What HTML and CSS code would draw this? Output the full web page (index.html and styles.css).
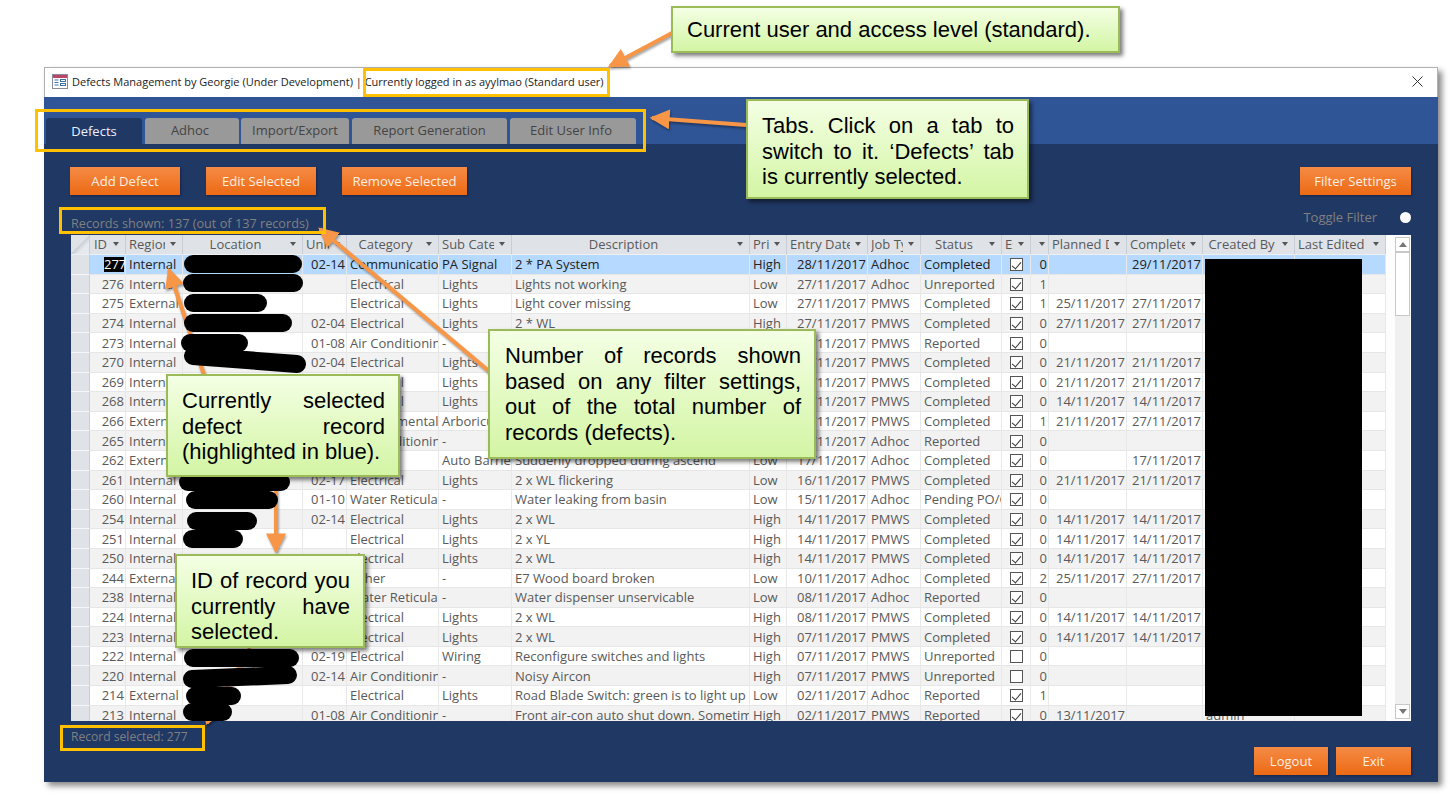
FILE: index.html
```html
<!DOCTYPE html>
<html lang="en">
<head>
  <meta charset="UTF-8" />
  <title>Defects Management</title>
  <link rel="stylesheet" href="styles.css">
</head>
<body>
  <div class="window">
    <div class="titlebar">
      <svg class="appicon" width="16" height="15" viewBox="0 0 16 15">
        <rect x="0.5" y="0.5" width="15" height="14" fill="#fff" stroke="#8a8a9a"/>
        <rect x="1" y="1" width="14" height="3" fill="#b8476a"/>
        <path d="M2.5 6h4M2.5 8.5h4M2.5 11h4" stroke="#3f6fa8" stroke-width="1"/>
        <rect x="8.5" y="5.5" width="5" height="2" fill="#fff" stroke="#3f6fa8"/>
        <rect x="8.5" y="9.5" width="5" height="2" fill="#fff" stroke="#3f6fa8"/>
      </svg>
      <span class="titletext">Defects Management by Georgie (Under Development) | Currently logged in as ayylmao (Standard user)</span>
      <svg class="closex" width="11" height="11" viewBox="0 0 11 11"><path d="M0.5 0.5l10 10M10.5 0.5l-10 10" stroke="#333" stroke-width="1"/></svg>
    </div>

    <div class="tabbar">
      <div class="tab tab-active tab-defects">Defects</div>
      <div class="tab tab-adhoc">Adhoc</div>
      <div class="tab tab-import">Import/Export</div>
      <div class="tab tab-report">Report Generation</div>
      <div class="tab tab-edit">Edit User Info</div>
    </div>

    <div class="main">
      <div class="toolbar">
        <button class="btn btn-add">Add Defect</button>
        <button class="btn btn-edit">Edit Selected</button>
        <button class="btn btn-remove">Remove Selected</button>
        <button class="btn btn-filter">Filter Settings</button>
      </div>

      <div class="statusrow">
        <span class="muted records">Records shown: 137 (out of 137 records)</span>
        <span class="muted toggle">Toggle Filter</span>
        <span class="dot"></span>
      </div>

      <div class="gridwrap">
        <table class="grid">
          <colgroup>
            <col class="c-sel"><col class="c-id"><col class="c-region"><col class="c-loc"><col class="c-unit"><col class="c-cat"><col class="c-sub"><col class="c-desc"><col class="c-pri"><col class="c-entry"><col class="c-job"><col class="c-status"><col class="c-esc"><col class="c-count"><col class="c-plan"><col class="c-done"><col class="c-by"><col class="c-edit">
          </colgroup>
          <thead>
            <tr>
              <th class="corner"></th>
              <th><div class="hd"><span>ID</span><i></i></div></th>
              <th><div class="hd"><span>Region</span><i></i></div></th>
              <th><div class="hd mid"><span>Location</span><i></i></div></th>
              <th><div class="hd"><span>Unit No</span><i></i></div></th>
              <th><div class="hd mid"><span>Category</span><i></i></div></th>
              <th><div class="hd"><span>Sub Category</span><i></i></div></th>
              <th><div class="hd mid"><span>Description</span><i></i></div></th>
              <th><div class="hd"><span>Priority</span><i></i></div></th>
              <th><div class="hd"><span>Entry Date</span><i></i></div></th>
              <th><div class="hd"><span>Job Type</span><i></i></div></th>
              <th><div class="hd mid"><span>Status</span><i></i></div></th>
              <th><div class="hd"><span>Escalated</span><i></i></div></th>
              <th><div class="hd"><span></span><i></i></div></th>
              <th><div class="hd"><span>Planned Date</span><i></i></div></th>
              <th><div class="hd"><span>Completed Date</span><i></i></div></th>
              <th><div class="hd mid"><span>Created By</span><i></i></div></th>
              <th><div class="hd"><span>Last Edited By</span><i></i></div></th>
            </tr>
          </thead>
          <tbody>
            <tr class="picked"><td class="firstsel"></td><td><span class="idpick">277</span></td><td>Internal</td><td></td><td>02-14</td><td>Communications</td><td>PA Signal</td><td>2 * PA System</td><td>High</td><td>28/11/2017</td><td>Adhoc</td><td>Completed</td><td><span class="chk on"></span></td><td>0</td><td></td><td>29/11/2017</td><td></td><td></td></tr>
            <tr><td></td><td>276</td><td>Internal</td><td></td><td></td><td>Electrical</td><td>Lights</td><td>Lights not working</td><td>Low</td><td>27/11/2017</td><td>Adhoc</td><td>Unreported</td><td><span class="chk on"></span></td><td>1</td><td></td><td></td><td></td><td></td></tr>
            <tr><td></td><td>275</td><td>External</td><td></td><td></td><td>Electrical</td><td>Lights</td><td>Light cover missing</td><td>Low</td><td>27/11/2017</td><td>PMWS</td><td>Completed</td><td><span class="chk on"></span></td><td>1</td><td>25/11/2017</td><td>27/11/2017</td><td></td><td></td></tr>
            <tr><td></td><td>274</td><td>Internal</td><td></td><td>02-04</td><td>Electrical</td><td>Lights</td><td>2 * WL</td><td>High</td><td>27/11/2017</td><td>PMWS</td><td>Completed</td><td><span class="chk on"></span></td><td>0</td><td>27/11/2017</td><td>27/11/2017</td><td></td><td></td></tr>
            <tr><td></td><td>273</td><td>Internal</td><td></td><td>01-08</td><td>Air Conditioning</td><td>-</td><td></td><td></td><td>27/11/2017</td><td>PMWS</td><td>Reported</td><td><span class="chk on"></span></td><td>0</td><td></td><td></td><td></td><td></td></tr>
            <tr><td></td><td>270</td><td>Internal</td><td></td><td>02-04</td><td>Electrical</td><td>Lights</td><td></td><td></td><td>27/11/2017</td><td>PMWS</td><td>Completed</td><td><span class="chk on"></span></td><td>0</td><td>21/11/2017</td><td>21/11/2017</td><td></td><td></td></tr>
            <tr><td></td><td>269</td><td>Internal</td><td></td><td></td><td>Electrical</td><td>Lights</td><td></td><td></td><td>21/11/2017</td><td>PMWS</td><td>Completed</td><td><span class="chk on"></span></td><td>0</td><td>21/11/2017</td><td>21/11/2017</td><td></td><td></td></tr>
            <tr><td></td><td>268</td><td>Internal</td><td></td><td></td><td>Electrical</td><td>Lights</td><td></td><td></td><td>21/11/2017</td><td>PMWS</td><td>Completed</td><td><span class="chk on"></span></td><td>0</td><td>14/11/2017</td><td>14/11/2017</td><td></td><td></td></tr>
            <tr><td></td><td>266</td><td>External</td><td></td><td></td><td>Environmental</td><td>Arboriculture</td><td></td><td></td><td>21/11/2017</td><td>PMWS</td><td>Completed</td><td><span class="chk on"></span></td><td>1</td><td>21/11/2017</td><td>27/11/2017</td><td></td><td></td></tr>
            <tr><td></td><td>265</td><td>Internal</td><td></td><td></td><td>Air Conditioning</td><td>-</td><td></td><td></td><td>20/11/2017</td><td>Adhoc</td><td>Reported</td><td><span class="chk on"></span></td><td>0</td><td></td><td></td><td></td><td></td></tr>
            <tr><td></td><td>262</td><td>External</td><td></td><td></td><td></td><td>Auto Barrier</td><td>Suddenly dropped during ascend</td><td>Low</td><td>17/11/2017</td><td>Adhoc</td><td>Completed</td><td><span class="chk on"></span></td><td>0</td><td></td><td>17/11/2017</td><td></td><td></td></tr>
            <tr><td></td><td>261</td><td>Internal</td><td></td><td>02-17</td><td>Electrical</td><td>Lights</td><td>2 x WL flickering</td><td>Low</td><td>16/11/2017</td><td>PMWS</td><td>Completed</td><td><span class="chk on"></span></td><td>0</td><td>21/11/2017</td><td>21/11/2017</td><td></td><td></td></tr>
            <tr><td></td><td>260</td><td>Internal</td><td></td><td>01-10</td><td>Water Reticulation</td><td>-</td><td>Water leaking from basin</td><td>Low</td><td>15/11/2017</td><td>Adhoc</td><td>Pending PO/Quote</td><td><span class="chk on"></span></td><td>0</td><td></td><td></td><td></td><td></td></tr>
            <tr><td></td><td>254</td><td>Internal</td><td></td><td>02-14</td><td>Electrical</td><td>Lights</td><td>2 x WL</td><td>High</td><td>14/11/2017</td><td>PMWS</td><td>Completed</td><td><span class="chk on"></span></td><td>0</td><td>14/11/2017</td><td>14/11/2017</td><td></td><td></td></tr>
            <tr><td></td><td>251</td><td>Internal</td><td></td><td></td><td>Electrical</td><td>Lights</td><td>2 x YL</td><td>High</td><td>14/11/2017</td><td>PMWS</td><td>Completed</td><td><span class="chk on"></span></td><td>0</td><td>14/11/2017</td><td>14/11/2017</td><td></td><td></td></tr>
            <tr><td></td><td>250</td><td>Internal</td><td></td><td></td><td>Electrical</td><td>Lights</td><td>2 x WL</td><td>High</td><td>14/11/2017</td><td>PMWS</td><td>Completed</td><td><span class="chk on"></span></td><td>0</td><td>14/11/2017</td><td>14/11/2017</td><td></td><td></td></tr>
            <tr><td></td><td>244</td><td>External</td><td></td><td></td><td>Other</td><td>-</td><td>E7 Wood board broken</td><td>Low</td><td>10/11/2017</td><td>Adhoc</td><td>Completed</td><td><span class="chk on"></span></td><td>2</td><td>25/11/2017</td><td>27/11/2017</td><td></td><td></td></tr>
            <tr><td></td><td>238</td><td>Internal</td><td></td><td></td><td>Water Reticulation</td><td>-</td><td>Water dispenser unservicable</td><td>Low</td><td>08/11/2017</td><td>Adhoc</td><td>Reported</td><td><span class="chk on"></span></td><td>0</td><td></td><td></td><td></td><td></td></tr>
            <tr><td></td><td>224</td><td>Internal</td><td></td><td></td><td>Electrical</td><td>Lights</td><td>2 x WL</td><td>High</td><td>08/11/2017</td><td>PMWS</td><td>Completed</td><td><span class="chk on"></span></td><td>0</td><td>14/11/2017</td><td>14/11/2017</td><td></td><td></td></tr>
            <tr><td></td><td>223</td><td>Internal</td><td></td><td></td><td>Electrical</td><td>Lights</td><td>2 x WL</td><td>High</td><td>07/11/2017</td><td>PMWS</td><td>Completed</td><td><span class="chk on"></span></td><td>0</td><td>14/11/2017</td><td>14/11/2017</td><td></td><td></td></tr>
            <tr><td></td><td>222</td><td>Internal</td><td></td><td>02-19</td><td>Electrical</td><td>Wiring</td><td>Reconfigure switches and lights</td><td>High</td><td>07/11/2017</td><td>PMWS</td><td>Unreported</td><td><span class="chk"></span></td><td>0</td><td></td><td></td><td></td><td></td></tr>
            <tr><td></td><td>220</td><td>Internal</td><td></td><td>02-14</td><td>Air Conditioning</td><td>-</td><td>Noisy Aircon</td><td>High</td><td>07/11/2017</td><td>PMWS</td><td>Unreported</td><td><span class="chk"></span></td><td>0</td><td></td><td></td><td></td><td></td></tr>
            <tr><td></td><td>214</td><td>External</td><td></td><td></td><td>Electrical</td><td>Lights</td><td>Road Blade Switch: green is to light up</td><td>Low</td><td>02/11/2017</td><td>Adhoc</td><td>Reported</td><td><span class="chk on"></span></td><td>1</td><td></td><td></td><td></td><td></td></tr>
            <tr><td></td><td>213</td><td>Internal</td><td></td><td>01-08</td><td>Air Conditioning</td><td>-</td><td>Front air-con auto shut down. Sometimes</td><td>High</td><td>02/11/2017</td><td>PMWS</td><td>Reported</td><td><span class="chk on"></span></td><td>0</td><td>13/11/2017</td><td></td><td>admin</td><td></td></tr>
          </tbody>
        </table>
        <div class="scrollbar">
          <div class="sb-btn"><i class="up"></i></div>
          <div class="sb-thumb"></div>
          <div class="sb-space"></div>
          <div class="sb-btn"><i class="down"></i></div>
        </div>
      </div>

      <div class="footer">
        <span class="muted selected">Record selected: 277</span>
        <div class="footbtns">
          <button class="btn btn-logout">Logout</button>
          <button class="btn btn-exit">Exit</button>
        </div>
      </div>
    </div>
  </div>

  <!-- annotations drawn on top of the screenshot -->
  <svg class="marks" width="1451" height="799" viewBox="0 0 1451 799">
    <defs>
      <marker id="head" markerWidth="5" markerHeight="5" refX="4.4" refY="2.5" orient="auto">
        <path d="M0 0L5 2.5L0 5z" class="headfill"/>
      </marker>
    </defs>
    <g class="arrows">
      <path d="M672 33L610 66" marker-end="url(#head)"/>
      <path d="M746 125L652 118" marker-end="url(#head)"/>
      <path d="M490 372L320 229" marker-end="url(#head)"/>
      <path d="M204 375L169 270" marker-end="url(#head)"/>
      <path d="M276 477V551" marker-end="url(#head)"/>
      <path d="M250 648L207 723" marker-end="url(#head)"/>
    </g>
    <rect class="redact" x="1205" y="259" width="157" height="457"/>
    <g class="blobs">
      <path d="M193 264H293"/>
      <path d="M192 283H294"/>
      <path d="M193 303H258"/>
      <path d="M193 323H283"/>
      <path d="M190 343H239"/>
      <path d="M193 356L297 364"/>
      <path d="M188 482H281"/>
      <path d="M195 500H269"/>
      <path d="M196 521H248"/>
      <path d="M192 539H234"/>
      <path d="M193 658H290"/>
      <path d="M192 679L288 675"/>
      <path d="M195 696H232"/>
      <path d="M192 712H223"/>
    </g>
  </svg>

  <div class="hl hl-title"></div>
  <div class="hl hl-tabs"></div>
  <div class="hl hl-records"></div>
  <div class="hl hl-selected"></div>

  <div class="note note-user">Current user and access level (standard).</div>
  <div class="note note-tabs">Tabs. Click on a tab to switch to it. ‘Defects’ tab is currently selected.</div>
  <div class="note note-count">Number of records shown based on any filter settings, out of the total number of records (defects).</div>
  <div class="note note-record">Currently selected defect record (highlighted in blue).</div>
  <div class="note note-id">ID of record you currently have selected.</div>
</body>
</html>
```

FILE: styles.css
```css
html, body { margin: 0; padding: 0; }
body { position: relative; width: 1451px; height: 799px; overflow: hidden; background: #fff; font-family: "Open Sans", "Noto Sans", sans-serif; font-size: 13px; color: #595959; }

.window { position: absolute; left: 44px; top: 67px; width: 1394px; height: 715px; display: flex; flex-direction: column; box-shadow: 4px 4px 6px #8a8a8a; }
.titlebar { height: 26px; display: flex; align-items: center; padding: 0 10px 3px 7px; background: #fff; border: 1px solid #b0b0b0; border-bottom: 0; }
.appicon { margin-right: 4px; flex: none; }
.titletext { font-size: 11px; color: #222; flex: 1; white-space: nowrap; }
.closex { flex: none; margin-right: 4px; }

.tabbar { height: 47px; background: #2f5597; display: flex; align-items: flex-end; gap: 3px; padding-left: 2px; }
.tab { height: 26px; line-height: 25px; text-align: center; background: #999; color: #444; border-radius: 3px 3px 0 0; }
.tab-active { background: #203864; color: #eef; line-height: 27px; }
.tab-defects { width: 96px; }
.tab-adhoc { width: 94px; padding-right: 4px; box-sizing: border-box; }
.tab-import { width: 108px; margin-left: -1px; }
.tab-report { width: 155px; }
.tab-edit { width: 126px; padding-right: 4px; box-sizing: border-box; }

.main { flex: 1; background: #203864; padding: 23px 27px 0; display: flex; flex-direction: column; }
.toolbar { display: flex; height: 28px; margin-left: -1px; }
.btn { height: 28px; border: 0; padding: 0; color: #fdeee3; font-family: inherit; font-size: 13.1px; background: linear-gradient(#f58b45, #ec6a14); box-shadow: 1px 1px 2px #15264a; }
.btn-add { width: 110px; margin-right: 26px; }
.btn-edit { width: 110px; margin-right: 26px; }
.btn-remove { width: 125px; }
.btn-filter { width: 111px; margin-left: auto; }
.btn-logout { width: 74px; margin-right: 8px; }
.btn-exit { width: 75px; }

.statusrow { height: 40px; display: flex; align-items: center; }
.muted { color: #808080; }
.records { padding-top: 16px; font-size: 12.7px; }
.toggle { margin-left: auto; margin-right: 23px; padding-top: 4px; }
.dot { width: 11px; height: 11px; margin-top: 4px; background: #fff; border-radius: 50%; }

.gridwrap { height: 486px; display: flex; background: #fdfdfd; overflow: hidden; }
.grid { width: 1315px; table-layout: fixed; border-collapse: separate; border-spacing: 0; flex: none; align-self: flex-start; }
.c-sel { width: 19px; } .c-id { width: 36px; } .c-region { width: 57px; } .c-loc { width: 120px; }
.c-unit { width: 44px; } .c-cat { width: 92px; } .c-sub { width: 73px; } .c-desc { width: 238px; }
.c-pri { width: 37px; } .c-entry { width: 81px; } .c-job { width: 53px; } .c-status { width: 81px; }
.c-esc { width: 29px; } .c-count { width: 18px; } .c-plan { width: 78px; } .c-done { width: 76px; }
.c-by { width: 92px; } .c-edit { width: 91px; }

th { height: 19px; padding: 0; background: #dfe3e8; border-right: 1px solid #c9ced6; border-bottom: 1px solid #eef0f3; font-weight: normal; }
.corner { background: linear-gradient(135deg, #dfe3e8 50%, #c8ced6 50%, #e6e9ed 70%); }
.hd { display: flex; align-items: center; height: 18px; padding: 0 6px 1px 3px; }
.hd span { flex: 1; min-width: 0; overflow: hidden; white-space: nowrap; }
.hd i { flex: none; width: 0; height: 0; margin-left: 5px; border: 3px solid transparent; border-top: 4px solid #555; border-bottom: 0; }
.mid span { text-align: center; }

td { height: 19.6px; padding: 1px 2px 0 3px; box-sizing: border-box; overflow: hidden; white-space: nowrap; border-right: 1px solid #e8e8e8; border-bottom: 1px solid #e6e6e6; background: #fff; line-height: 17px; }
tbody tr:nth-child(even) td { background: #f2f2f2; }
tbody td:first-child { background: #dfe3e8; border-right: 1px solid #c9ced6; border-bottom: 1px solid #f4f5f7; }
tbody tr:nth-child(even) td:first-child { background: #dfe3e8; }
td:nth-child(2), td:nth-child(5), td:nth-child(10), td:nth-child(14), td:nth-child(15), td:nth-child(16) { text-align: right; padding-right: 1px; }
td:nth-child(13) { text-align: center; }
.picked td { background: #b5d9ff; color: #222; }
tbody .picked td.firstsel { background: #dfe3e8; }
.idpick { display: inline-block; width: 20px; background: #000; color: #fff; line-height: 15px; text-align: right; }

.chk { display: inline-block; position: relative; width: 13px; height: 13px; box-sizing: border-box; vertical-align: -2px; background: #fff; border: 1px solid #555; }
.chk.on::after { content: ""; position: absolute; left: 3px; top: 1px; width: 4px; height: 8px; border-right: 1px solid #333; border-bottom: 1px solid #333; transform: rotate(40deg); }

.scrollbar { width: 15px; margin: 2px 1px 2px 9px; display: flex; flex-direction: column; background: #f0f0f0; flex: none; }
.sb-btn { height: 15px; background: #fff; border: 1px solid #c8c8c8; box-sizing: border-box; display: flex; align-items: center; justify-content: center; }
.sb-btn i { width: 0; height: 0; border: 4px solid transparent; }
.sb-btn .up { border-bottom: 5px solid #777; border-top: 0; }
.sb-btn .down { border-top: 5px solid #777; border-bottom: 0; }
.sb-thumb { height: 64px; background: #fff; border: 1px solid #c8c8c8; box-sizing: border-box; }
.sb-space { flex: 1; }

.footer { flex: 1; display: flex; justify-content: space-between; align-items: flex-start; }
.selected { margin-top: 7px; font-size: 12.1px; }
.footbtns { display: flex; margin-top: 26px; }

/* annotation layer */
.marks { position: absolute; left: 0; top: 0; }
.arrows path { fill: none; stroke: #f79646; stroke-width: 4; }
.arrows { filter: drop-shadow(1px 2px 1px rgba(0,0,0,.35)); }
.headfill { fill: #f79646; stroke: none; }
.redact { fill: #000; }
.blobs path { fill: none; stroke: #000; stroke-width: 18; stroke-linecap: round; }

.hl { position: absolute; box-sizing: border-box; border: 3px solid #ffc000; }
.hl-title { left: 363px; top: 68px; width: 247px; height: 29px; }
.hl-tabs { left: 35px; top: 109px; width: 611px; height: 43px; }
.hl-records { left: 59px; top: 207px; width: 267px; height: 27px; }
.hl-selected { left: 60px; top: 725px; width: 145px; height: 26px; }

.note { position: absolute; box-sizing: border-box; padding: 12px 13px 12px 14px; font-family: "Liberation Sans", Arial, sans-serif; font-size: 22px; line-height: 25.5px; color: #000; text-align: justify; background: linear-gradient(#f4ffe4, #d3f5a4); border: 2px solid #9bbb59; box-shadow: 3px 3px 4px rgba(0,0,0,.5); }
.note-user { left: 671px; top: 6px; width: 449px; height: 47px; padding-top: 9px; white-space: nowrap; }
.note-tabs { left: 746px; top: 99px; width: 283px; height: 100px; }
.note-count { left: 488px; top: 329px; width: 328px; height: 130px; padding-left: 15px; }
.note-record { left: 166px; top: 374px; width: 234px; height: 103px; }
.note-id { left: 175px; top: 554px; width: 190px; height: 94px; }
```
